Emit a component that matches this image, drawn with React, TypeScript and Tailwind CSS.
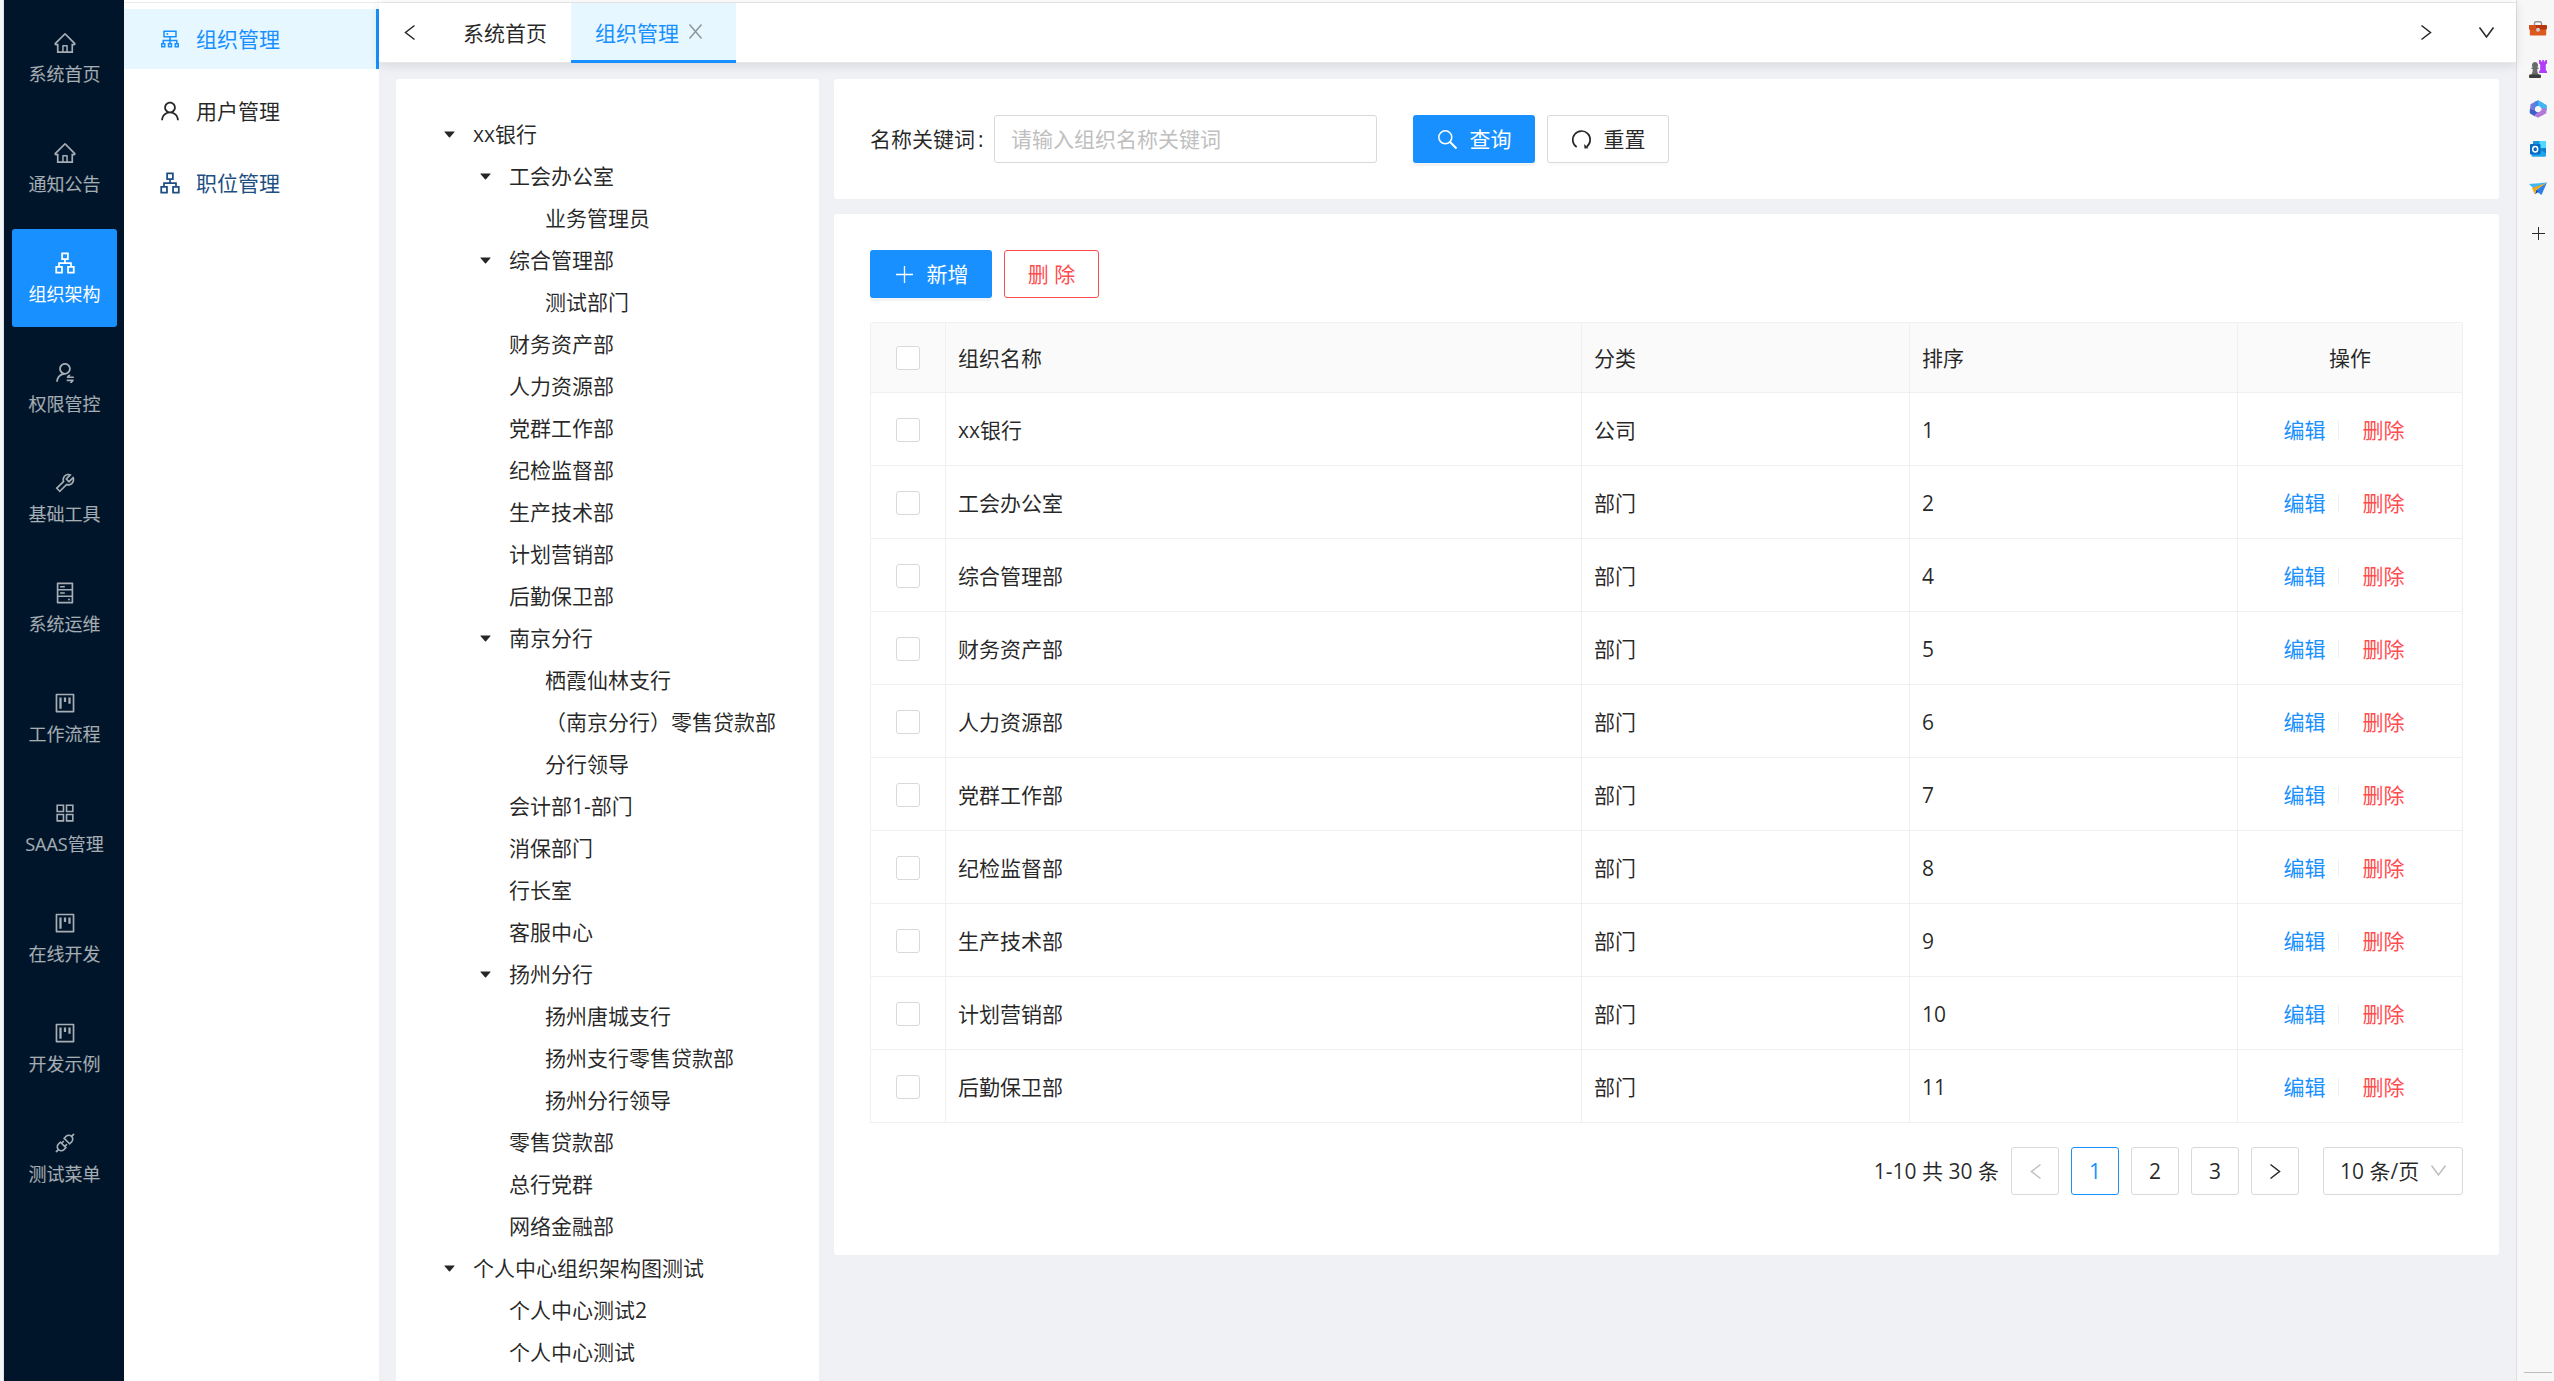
import React, { useState } from "react";
import type { ReactNode } from "react";
import type { IconType } from "react-icons";
import {
  AiOutlineHome,
  AiOutlineApartment,
  AiOutlineUserSwitch,
  AiOutlineTool,
  AiOutlineHdd,
  AiOutlineProject,
  AiOutlineAppstore,
  AiOutlineApi,
  AiOutlineCluster,
  AiOutlineUser,
  AiFillCaretDown,
} from "react-icons/ai";

const modules: { label: string; Icon: IconType }[] = [
  { label: "系统首页", Icon: AiOutlineHome },
  { label: "通知公告", Icon: AiOutlineHome },
  { label: "组织架构", Icon: AiOutlineApartment },
  { label: "权限管控", Icon: AiOutlineUserSwitch },
  { label: "基础工具", Icon: AiOutlineTool },
  { label: "系统运维", Icon: AiOutlineHdd },
  { label: "工作流程", Icon: AiOutlineProject },
  { label: "SAAS管理", Icon: AiOutlineAppstore },
  { label: "在线开发", Icon: AiOutlineProject },
  { label: "开发示例", Icon: AiOutlineProject },
  { label: "测试菜单", Icon: AiOutlineApi },
];

type TreeNode = { title: string; children?: TreeNode[] };

const tree: TreeNode[] = [
  {
    title: "xx银行",
    children: [
      { title: "工会办公室", children: [{ title: "业务管理员" }] },
      { title: "综合管理部", children: [{ title: "测试部门" }] },
      { title: "财务资产部" },
      { title: "人力资源部" },
      { title: "党群工作部" },
      { title: "纪检监督部" },
      { title: "生产技术部" },
      { title: "计划营销部" },
      { title: "后勤保卫部" },
      {
        title: "南京分行",
        children: [
          { title: "栖霞仙林支行" },
          { title: "（南京分行）零售贷款部" },
          { title: "分行领导" },
        ],
      },
      { title: "会计部1-部门" },
      { title: "消保部门" },
      { title: "行长室" },
      { title: "客服中心" },
      {
        title: "扬州分行",
        children: [
          { title: "扬州唐城支行" },
          { title: "扬州支行零售贷款部" },
          { title: "扬州分行领导" },
        ],
      },
      { title: "零售贷款部" },
      { title: "总行党群" },
      { title: "网络金融部" },
    ],
  },
  {
    title: "个人中心组织架构图测试",
    children: [{ title: "个人中心测试2" }, { title: "个人中心测试" }],
  },
];

const rows: [string, string, number][] = [
  ["xx银行", "公司", 1],
  ["工会办公室", "部门", 2],
  ["综合管理部", "部门", 4],
  ["财务资产部", "部门", 5],
  ["人力资源部", "部门", 6],
  ["党群工作部", "部门", 7],
  ["纪检监督部", "部门", 8],
  ["生产技术部", "部门", 9],
  ["计划营销部", "部门", 10],
  ["后勤保卫部", "部门", 11],
];

function Glyph({ className, children }: { className?: string; children: ReactNode }) {
  return (
    <svg
      width="21"
      height="21"
      viewBox="0 0 21 21"
      fill="none"
      stroke="currentColor"
      strokeWidth="1.5"
      aria-hidden="true"
      className={className}
    >
      {children}
    </svg>
  );
}

const LeftIcon = () => (
  <Glyph>
    <path d="M15.500 3.500 6.500 10.500l9 7" />
  </Glyph>
);
const RightIcon = () => (
  <Glyph>
    <path d="m5.500 3.500 9 7-9 7" />
  </Glyph>
);
const DownIcon = ({ className }: { className?: string }) => (
  <Glyph className={className}>
    <path d="m3.500 5.500 7 9.500 7-9.500" />
  </Glyph>
);
const SmallDownIcon = ({ className }: { className?: string }) => (
  <Glyph className={className}>
    <path d="m3.500 5.500 7 9.500 7-9.500" />
  </Glyph>
);
const CloseIcon = () => (
  <Glyph>
    <path d="m4.500 3.500 12 14M16.500 3.500l-12 14" />
  </Glyph>
);
const SearchIcon = () => (
  <Glyph>
    <circle cx="8.300" cy="8.300" r="6.500" />
    <path d="m13 13 6.500 6.500" strokeWidth="2" />
  </Glyph>
);
const ResetIcon = () => (
  <Glyph>
    <path d="M5.700 18A8.700 8.700 0 1 1 15.800 17.600" strokeWidth="1.700" />
    <path d="m13.200 15 .3 4.600 4-.4z" fill="currentColor" stroke="none" />
  </Glyph>
);
const PlusIcon = () => (
  <Glyph>
    <path d="M10.500 2v17M2 10.500h17" strokeWidth="1.300" />
  </Glyph>
);

function ModuleRail() {
  return (
    <nav aria-label="模块" className="flex w-[120px] shrink-0 flex-col gap-3 bg-[#001529] pt-[9px] pr-[7px] pl-2">
      {modules.map(({ label, Icon }) => (
        <a
          key={label}
          href="#"
          className={
            label === "组织架构"
              ? "flex h-[98px] shrink-0 flex-col items-center justify-center gap-[7px] rounded-[3px] bg-[#1890ff] text-lg leading-6 text-white"
              : "flex h-[98px] shrink-0 flex-col items-center justify-center gap-[7px] rounded-[3px] text-lg leading-6 text-white/65"
          }
        >
          <Icon size={24} />
          {label}
        </a>
      ))}
    </nav>
  );
}

function SubMenu() {
  const base = "flex h-[60px] items-center gap-3.5 pl-[34px]";
  return (
    <nav aria-label="组织架构" className="flex w-[255px] shrink-0 flex-col gap-3 bg-white pt-1.5">
      <a href="#" aria-current="page" className={`${base} border-r-3 border-[#1890ff] bg-[#e6f7ff] text-[#1890ff]`}>
        <AiOutlineCluster size={24} />
        组织管理
      </a>
      <a href="#" className={base}>
        <AiOutlineUser size={24} />
        用户管理
      </a>
      <a href="#" className={`${base} text-[#1d4f82]`}>
        <AiOutlineApartment size={24} />
        职位管理
      </a>
    </nav>
  );
}

function TabBar() {
  const arrow = "flex h-full w-[60px] items-center justify-center";
  return (
    <div className="relative flex h-[60px] shrink-0 items-stretch border-b border-[#e8e8e8] bg-white shadow-[0_2px_10px_rgba(0,21,41,0.12)]">
      <button type="button" aria-label="向左" className={arrow}>
        <LeftIcon />
      </button>
      <button type="button" className="px-6">
        系统首页
      </button>
      <div className="-mb-px flex items-center gap-1.5 border-b-3 border-[#1890ff] bg-[#e6f7ff] pr-[30px] pl-6 text-[#1890ff]">
        <button type="button" className="pt-0.5">组织管理</button>
        <button type="button" aria-label="关闭" className="text-[#8c9599]">
          <CloseIcon />
        </button>
      </div>
      <div className="ml-auto flex">
        <button type="button" aria-label="向右" className={arrow}>
          <RightIcon />
        </button>
        <button type="button" aria-label="更多" className={arrow}>
          <DownIcon />
        </button>
      </div>
    </div>
  );
}

function Branch({ node }: { node: TreeNode }) {
  const [open, setOpen] = useState(true);
  return (
    <li>
      <div className="flex h-[42px] items-center">
        {node.children ? (
          <button
            type="button"
            aria-label={open ? "收起" : "展开"}
            onClick={() => setOpen(!open)}
            className="flex w-9 shrink-0 items-center justify-center"
          >
            <AiFillCaretDown size={15} />
          </button>
        ) : (
          <span className="w-9 shrink-0" />
        )}
        <span className="pl-1.5 whitespace-nowrap">{node.title}</span>
      </div>
      {node.children && open && (
        <ul className="pl-9">
          {node.children.map((c) => (
            <Branch key={c.title} node={c} />
          ))}
        </ul>
      )}
    </li>
  );
}

function SearchForm() {
  return (
    <form
      onSubmit={(e) => e.preventDefault()}
      className="flex items-center rounded-[3px] bg-white px-9 py-9"
    >
      <label htmlFor="keyword" className="flex w-[124px] shrink-0 gap-[3px]">
        名称关键词<span>:</span>
      </label>
      <input
        id="keyword"
        type="text"
        placeholder="请输入组织名称关键词"
        className="h-12 w-[383px] rounded-[3px] border border-[#d9d9d9] px-4 outline-none placeholder:text-[#bfbfbf]"
      />
      <button
        type="submit"
        className="ml-9 flex h-12 w-[122px] items-center justify-center gap-3 rounded-[3px] bg-[#1890ff] text-white shadow-[0_3px_0_rgba(0,0,0,0.045)]"
      >
        <SearchIcon />
        查询
      </button>
      <button
        type="reset"
        className="ml-3 flex h-12 w-[122px] items-center justify-center gap-3 rounded-[3px] border border-[#d9d9d9] shadow-[0_3px_0_rgba(0,0,0,0.016)]"
      >
        <ResetIcon />
        重置
      </button>
    </form>
  );
}

function Check({ label }: { label: string }) {
  return (
    <input
      type="checkbox"
      aria-label={label}
      className="mx-auto block size-6 appearance-none rounded-[3px] border border-[#d9d9d9] bg-white checked:bg-[#1890ff]"
    />
  );
}

function OrgTable() {
  const cell = "border-r border-b border-[#f0f0f0] px-3";
  const bodyCell = "border-r border-b border-[#f0f0f0] px-3 pt-0.5";
  return (
    <table className="w-full table-fixed border-separate border-spacing-0 rounded-t-[3px] border-t border-l border-[#f0f0f0] text-left">
      <colgroup>
        <col className="w-[75px]" />
        <col />
        <col className="w-[328px]" />
        <col className="w-[328px]" />
        <col className="w-[225px]" />
      </colgroup>
      <thead className="bg-[#fafafa]">
        <tr className="h-[70px]">
          <th className={cell}>
            <Check label="全选" />
          </th>
          <th className={`${cell} font-normal`}>组织名称</th>
          <th className={`${cell} font-normal`}>分类</th>
          <th className={`${cell} font-normal`}>排序</th>
          <th className={`${cell} text-center font-normal`}>操作</th>
        </tr>
      </thead>
      <tbody>
        {rows.map(([name, kind, order]) => (
          <tr key={name} className="h-[73px]">
            <td className={bodyCell}>
              <Check label={name} />
            </td>
            <td className={bodyCell}>{name}</td>
            <td className={bodyCell}>{kind}</td>
            <td className={bodyCell}>{order}</td>
            <td className={bodyCell}>
              <div className="flex items-center justify-center gap-3">
                <button type="button" className="text-[#1890ff]">
                  编辑
                </button>
                <span className="h-[18px] w-px bg-[#f0f0f0]" />
                <button type="button" className="px-3 text-[#ff4d4f]">
                  删除
                </button>
              </div>
            </td>
          </tr>
        ))}
      </tbody>
    </table>
  );
}

function PageButton({ label, active, muted, children }: { label: string; active?: boolean; muted?: boolean; children: ReactNode }) {
  const base = "flex size-12 items-center justify-center rounded-[3px] border";
  const tone = active
    ? "border-[#1890ff] font-medium text-[#1890ff]"
    : muted
      ? "border-[#d9d9d9] text-[#bfbfbf]"
      : "border-[#d9d9d9]";
  return (
    <button type="button" aria-label={label} className={`${base} ${tone}`}>
      {children}
    </button>
  );
}

function Pagination() {
  return (
    <div className="mt-6 flex items-center justify-end gap-3">
      <span>1-10 共 30 条</span>
      <PageButton label="上一页" muted>
        <LeftIcon />
      </PageButton>
      <PageButton label="第 1 页" active>
        1
      </PageButton>
      <PageButton label="第 2 页">2</PageButton>
      <PageButton label="第 3 页">3</PageButton>
      <PageButton label="下一页">
        <RightIcon />
      </PageButton>
      <div className="relative ml-3">
        <select
          aria-label="每页条数"
          className="h-12 w-[140px] appearance-none rounded-[3px] border border-[#d9d9d9] bg-white pl-4 outline-none"
        >
          <option>10 条/页</option>
          <option>20 条/页</option>
        </select>
        <SmallDownIcon className="pointer-events-none absolute top-[13px] right-[14px] text-[#bfbfbf]" />
      </div>
    </div>
  );
}

function AppStrip() {
  const item = "flex size-10 items-center justify-center";
  return (
    <aside className="flex w-[38px] shrink-0 flex-col items-center border-l border-[#e0e0e0] bg-[#f7f7f7] pt-[9px] pb-2 pl-[5px]">
      <button type="button" aria-label="工具" className={item}>
        <svg width="18" height="18" viewBox="0 0 18 18">
          <path d="M5.500 5V3.200A1.400 1.400 0 0 1 6.900 1.800h4.200a1.400 1.400 0 0 1 1.400 1.400V5" fill="none" stroke="#8f9296" strokeWidth="1.400" />
          <rect x="0.800" y="9" width="16.400" height="6.600" rx="1" fill="#dc5a1e" />
          <rect x="0" y="5" width="18" height="4.600" rx="0.800" fill="#b8350d" />
          <rect x="0" y="5" width="7" height="4.600" rx="0.800" fill="#d9501c" />
          <circle cx="9" cy="9.800" r="2" fill="#c9cdd1" />
        </svg>
      </button>
      <button type="button" aria-label="游戏" className={item}>
        <svg width="18" height="18" viewBox="0 0 18 18">
          <path d="M10 0h1.800v1.500h1.400V0h1.600v1.500h1.400V0H18v3.600l-1.200 1V10l1.200 1.400V13h-8v-1.600l1.200-1.400V4.600L10 3.600z" fill="#b13dfa" />
          <path d="M6 2a3.200 3.200 0 0 1 2.200 5.400h1.300v1.500H8.200c.1 2.700.5 4.600 2 6.100H1.800C3.300 13.500 3.700 11.600 3.800 8.900H2.500V7.400h1.300A3.200 3.200 0 0 1 6 2z" fill="#6b6b6b" />
          <rect x="0" y="14.500" width="12" height="3.500" rx="1" fill="#3c3c3c" />
        </svg>
      </button>
      <button type="button" aria-label="Microsoft 365" className={item}>
        <svg width="18" height="18" viewBox="0 0 18 18">
          <path d="M9 0.300 5.500 2v7L9 6l3.500 2 5 2V5.300z" fill="#2f8fe6" />
          <path d="M9 0.300 14 3l3.500 2.300v6L12.500 8 9 6z" fill="#41b4f2" />
          <path d="M7.500 1 1.500 4.300.8 12.500 5 14.500l3.500-1.800L6 10.500V6z" fill="#7478d8" />
          <path d="M0.800 9v4.200L6 16.500l3-4-3.500-2z" fill="#3c5fc9" />
          <path d="M17.300 8.500v4.700L9 17.800l-4-2.300 3.500-3 4-2.500V8z" fill="#b07ad6" />
          <circle cx="9" cy="9" r="3" fill="#f7f7f7" />
        </svg>
      </button>
      <button type="button" aria-label="Outlook" className={item}>
        <svg width="18" height="18" viewBox="0 0 18 18">
          <rect x="4" y="1" width="13" height="14" rx="1" fill="#1a93dd" />
          <rect x="10.500" y="1" width="6.500" height="7" fill="#50d9ff" />
          <path d="M2.500 9.500 10 13l7-5v7.500a1.300 1.300 0 0 1-1.300 1.300H3.800a1.300 1.300 0 0 1-1.300-1.300z" fill="#1fa5ea" />
          <path d="m11 9 6 4.500V8z" fill="#0f7fc9" />
          <rect x="1" y="4" width="10.500" height="10.500" rx="1" fill="#0669c4" />
          <ellipse cx="6.200" cy="9.200" rx="2.500" ry="2.700" fill="none" stroke="#fff" strokeWidth="1.500" />
        </svg>
      </button>
      <button type="button" aria-label="发送" className={item}>
        <svg width="18" height="18" viewBox="0 0 18 18">
          <path d="M0 4 18 2.500 6 10z" fill="#41b7f3" />
          <path d="M18 2.500 12.500 15 6.500 10.500z" fill="#2e7fe8" />
          <path d="M3 8 17.500 3 7.500 9.500l-1.800 4.800z" fill="#f2a916" />
          <path d="m7.500 10 2.200 1.800-3.700 2.500z" fill="#1b4db0" />
        </svg>
      </button>
      <button type="button" aria-label="添加" className="mt-1 flex size-10 items-center justify-center">
        <svg width="13" height="13" viewBox="0 0 13 13">
          <path d="M6.500 0v13M0 6.500h13" stroke="#2b2b2b" strokeWidth="1" />
        </svg>
      </button>
      <span className="mt-auto h-px w-7 bg-[#bdbdbd]" />
    </aside>
  );
}

export default function App() {
  return (
    <div className="flex h-screen overflow-hidden bg-[#f0f1f5] font-['Open_Sans','Noto_Sans_CJK_SC',sans-serif] text-[21px] leading-8 text-black/85">
      <div className="w-1 shrink-0 border-r border-[#dfe3e6] bg-[#f3f6f7]" />
      <ModuleRail />
      <div className="flex min-w-0 flex-1 flex-col">
        <div className="h-[3px] shrink-0 border-b border-[#ebebeb] bg-white" />
        <div className="flex min-h-0 flex-1">
          <SubMenu />
          <div className="flex min-w-0 flex-1 flex-col">
            <TabBar />
            <main className="flex min-h-0 flex-1 gap-[15px] pt-4 pr-[17px] pl-[17px]">
              <section aria-label="组织树" className="w-[423px] shrink-0 overflow-hidden rounded-t-[3px] bg-white pt-[34px] pl-[35px]">
                <ul>
                  {tree.map((n) => (
                    <Branch key={n.title} node={n} />
                  ))}
                </ul>
              </section>
              <div className="flex min-w-0 flex-1 flex-col gap-[15px]">
                <SearchForm />
                <section aria-label="组织列表" className="rounded-[3px] bg-white px-9 pt-9 pb-[60px]">
                  <div className="mb-6 flex gap-3">
                    <button
                      type="button"
                      className="flex h-12 w-[122px] items-center justify-center gap-3 rounded-[3px] bg-[#1890ff] text-white shadow-[0_3px_0_rgba(0,0,0,0.045)]"
                    >
                      <PlusIcon />
                      新增
                    </button>
                    <button
                      type="button"
                      className="h-12 w-[95px] rounded-[3px] border border-[#ff4d4f] text-[#ff4d4f]"
                    >
                      删 除
                    </button>
                  </div>
                  <OrgTable />
                  <Pagination />
                </section>
              </div>
            </main>
          </div>
        </div>
      </div>
      <AppStrip />
    </div>
  );
}
